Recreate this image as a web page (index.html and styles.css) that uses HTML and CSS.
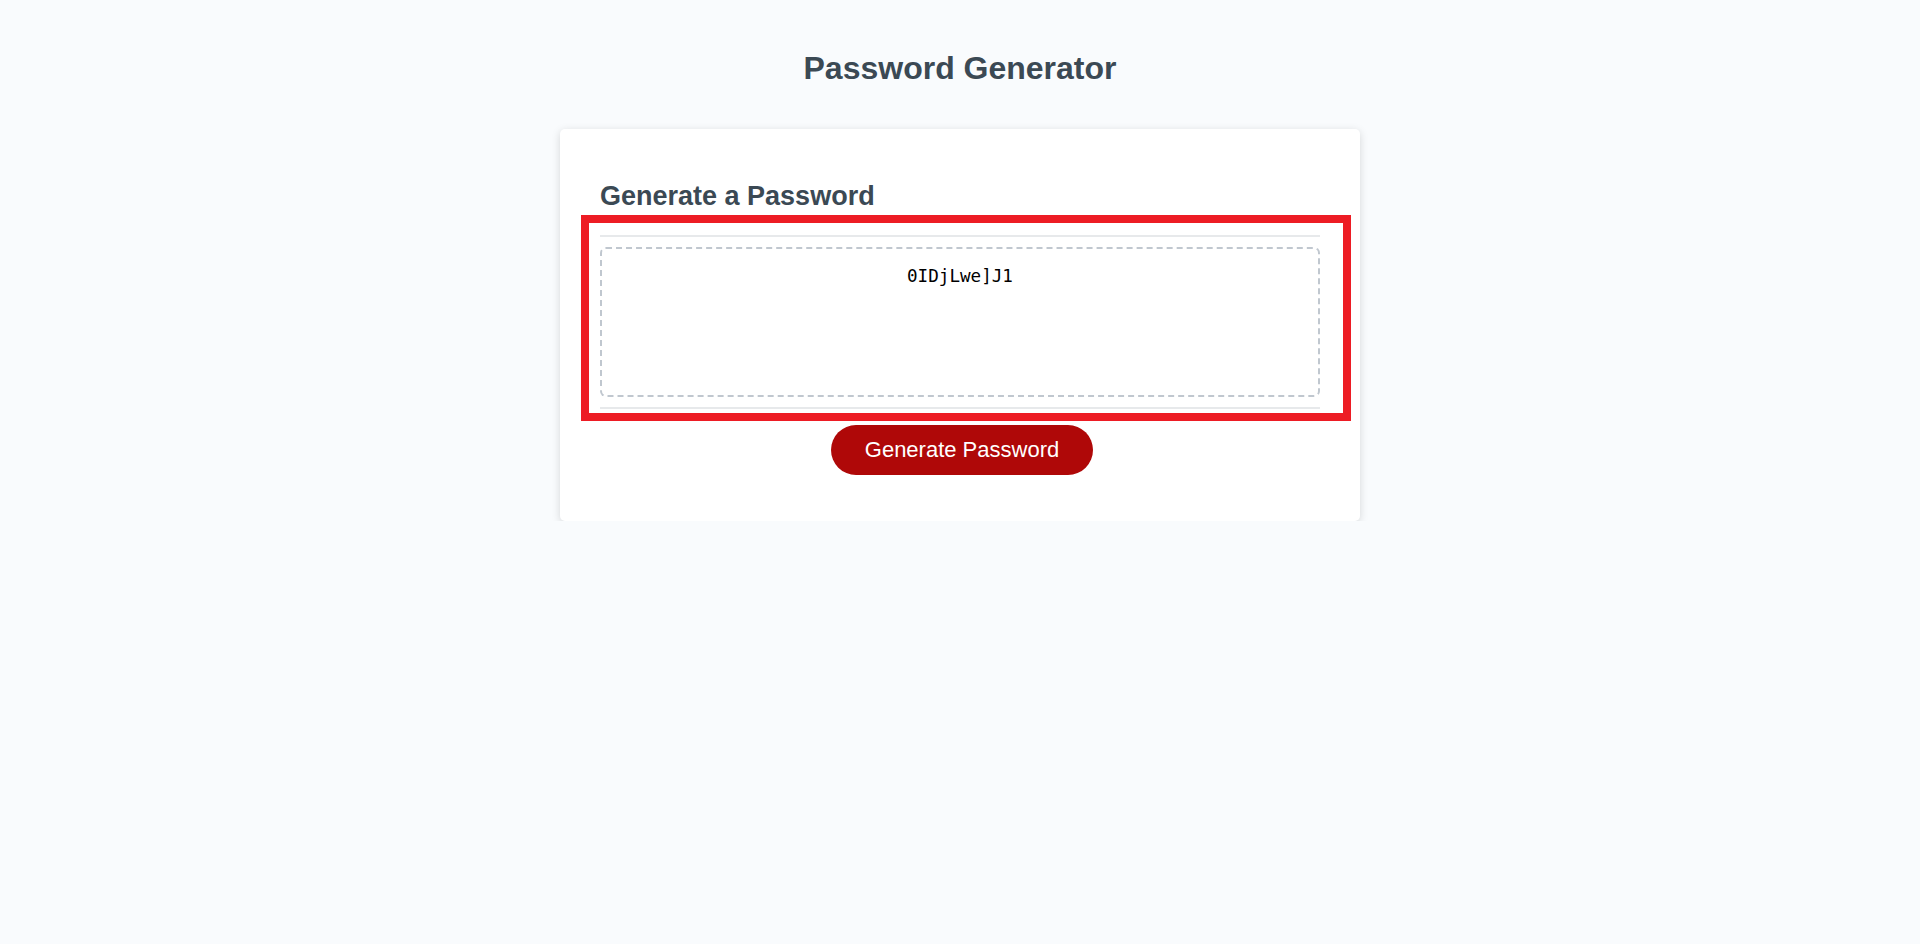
FILE: index.html
```html
<!DOCTYPE html>
<html lang="en">
<head>
  <meta charset="UTF-8" />
  <meta name="viewport" content="width=device-width, initial-scale=1.0"/>
  <title>Password Generator</title>
  <link rel="stylesheet" href="styles.css">
</head>
<body>
  <div class="wrapper">
    <header>
      <h1>Password Generator</h1>
    </header>

    <!-- main card -->
    <div class="card">
      <div class="card-header">
        <h2>Generate a Password</h2>
      </div>
      <div class="card-body">
        <textarea readonly id="password" class="password" aria-label="Generated Password">0IDjLwe]J1</textarea>
      </div>
      <div class="card-footer">
        <button id="generate" class="btn">Generate Password</button>
      </div>
      <!-- highlight around the output area -->
      <div class="highlight"></div>
    </div>
  </div>

  <script>
    var chars = 'ABCDEFGHIJKLMNOPQRSTUVWXYZabcdefghijklmnopqrstuvwxyz0123456789!@#$%^&*()[]';
    document.getElementById('generate').addEventListener('click', function () {
      var out = '';
      for (var i = 0; i < 10; i++) {
        out += chars[Math.floor(Math.random() * chars.length)];
      }
      document.getElementById('password').value = out;
    });
  </script>
</body>
</html>
```

FILE: styles.css
```css
*, *::before, *::after {
  box-sizing: border-box;
}

body {
  margin: 0;
  padding: 0;
  background-color: #f9fbfd;
  font-family: "Liberation Sans", Arial, sans-serif;
}

.wrapper {
  padding: 30px 20px 0;
}

header {
  text-align: center;
  padding: 0 20px 20px;
  color: hsl(206, 17%, 28%);
}
header h1 {
  margin: 20px 0 22px;
}

/* card */
.card {
  position: relative;
  max-width: 800px;
  margin: 0 auto;
  padding: 30px 40px;
  background-color: #fff;
  border-radius: 5px;
  box-shadow: rgba(0, 0, 0, 0.15) 0 2px 8px 0;
  color: hsl(206, 17%, 28%);
  font-size: 18px;
}

.card-header::after,
.card-footer::before {
  content: " ";
  display: block;
  width: 100%;
  height: 2px;
  background: #e7e9eb;
}

.card-body {
  padding: 10px 0;
}

.card-footer {
  text-align: center;
}

.password {
  display: block;
  width: 100%;
  height: 150px;
  padding: 17px 20px;
  border: 2px dashed #c0c7cf;
  border-radius: 6px;
  resize: none;
  overflow: hidden;
  font-family: "DejaVu Sans Mono", monospace;
  font-size: 17.6px;
  color: #000;
  text-align: center;
  background: #fff;
}

.btn {
  display: inline-block;
  margin: 16px 16px 16px 20px;
  padding: 14px 34px;
  border: none;
  border-radius: 25px;
  background-color: hsl(360, 91%, 36%);
  color: #fff;
  font-family: "Liberation Sans", Arial, sans-serif;
  font-size: 22px;
  line-height: 22px;
  cursor: pointer;
}

.highlight {
  position: absolute;
  top: 86px;
  left: 21px;
  width: 770px;
  height: 206px;
  border: 8px solid #ed1c24;
  pointer-events: none;
}
```
